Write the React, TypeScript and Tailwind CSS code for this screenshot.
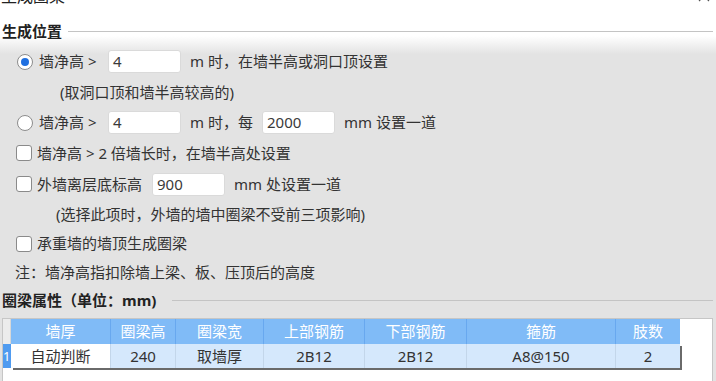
import React from "react";

const FONT = { fontFamily: '"Noto Sans", "Noto Sans CJK SC", sans-serif' };

function Radio({ checked }: { checked?: boolean }) {
  return (
    <span className="w-[16px] h-[16px] rounded-full border border-[#8c8c8c] bg-white flex items-center justify-center shrink-0">
      {checked && <span className="w-[8px] h-[8px] rounded-full bg-[#1f6fe0]" />}
    </span>
  );
}

function Check() {
  return <span className="w-[16px] h-[16px] rounded-[3px] border border-[#8a8a8a] bg-white shrink-0" />;
}

function Input({ value, w = "w-[73px]" }: { value: string; w?: string }) {
  return (
    <div className={`${w} h-[23px] bg-white rounded-[3px] border border-[#dadada] flex items-center pl-[4px] text-[15px] text-[#3a3a3a] shrink-0`}>
      {value}
    </div>
  );
}

const cols = [
  { h: "墙厚", v: "自动判断", w: "w-[100px]", white: true },
  { h: "圈梁高", v: "240", w: "w-[65px]" },
  { h: "圈梁宽", v: "取墙厚", w: "w-[88px]" },
  { h: "上部钢筋", v: "2B12", w: "w-[101px]" },
  { h: "下部钢筋", v: "2B12", w: "w-[102px]" },
  { h: "箍筋", v: "A8@150", w: "w-[149px]" },
  { h: "肢数", v: "2", w: "w-[64px]" },
];

export default function App() {
  return (
    <div
      style={FONT}
      className="w-[716px] h-[381px] overflow-hidden text-[15px] text-[#333] bg-[linear-gradient(to_bottom,#ffffff_0px,#ffffff_36px,#e3e3e3_54px,#e3e3e3_100%)]"
    >
      {/* title bar (mostly cut off) */}
      <div className="h-[16px] -mt-[12px] flex items-end justify-between pl-[1px] pr-[6px] leading-[16px]">
        <span className="text-[16px] text-[#222]">生成圈梁</span>
        <svg width="12" height="12" viewBox="0 0 12 12" className="mb-[2px]">
          <path d="M1 1L11 11M11 1L1 11" stroke="#555" strokeWidth="1.2" />
        </svg>
      </div>

      {/* section 1 */}
      <div className="mt-[12px] h-[30px] flex items-center pl-[2px] pr-[3px]">
        <span className="w-[66px] font-bold text-[#222] shrink-0">生成位置</span>
        <div className="flex-1 h-px bg-[#c4c4c4]" />
      </div>

      <div className="h-[31px] flex items-center pl-[17px]">
        <Radio checked />
        <span className="ml-[6px] w-[69px]">墙净高 &gt;</span>
        <Input value="4" />
        <span className="ml-[9px]">m 时，在墙半高或洞口顶设置</span>
      </div>

      <div className="h-[30px] flex items-center pl-[60px]">(取洞口顶和墙半高较高的)</div>

      <div className="h-[31px] flex items-center pl-[17px]">
        <Radio />
        <span className="ml-[6px] w-[69px]">墙净高 &gt;</span>
        <Input value="4" />
        <span className="ml-[9px] w-[72px]">m 时，每</span>
        <Input value="2000" />
        <span className="ml-[9px]">mm 设置一道</span>
      </div>

      <div className="h-[30px] flex items-center pl-[16px]">
        <Check />
        <span className="ml-[5px]">墙净高 &gt; 2 倍墙长时，在墙半高处设置</span>
      </div>

      <div className="h-[32px] flex items-center pl-[16px]">
        <Check />
        <span className="ml-[5px] w-[115px]">外墙离层底标高</span>
        <Input value="900" />
        <span className="ml-[9px]">mm 处设置一道</span>
      </div>

      <div className="h-[29px] flex items-center pl-[56px]">(选择此项时，外墙的墙中圈梁不受前三项影响)</div>

      <div className="h-[29px] flex items-center pl-[16px]">
        <Check />
        <span className="ml-[5px]">承重墙的墙顶生成圈梁</span>
      </div>

      <div className="h-[28px] flex items-center pl-[15px]">注：墙净高指扣除墙上梁、板、压顶后的高度</div>

      {/* section 2 */}
      <div className="h-[28px] flex items-center pl-[2px] pr-[3px]">
        <span className="w-[170px] font-bold text-[#222] shrink-0">圈梁属性（单位：mm)</span>
        <div className="flex-1 h-px bg-[#c4c4c4]" />
      </div>

      {/* table */}
      <div className="mt-[4px] ml-[2px] w-[711px] h-[80px] bg-white border border-[#c6c6c6]">
        <div className="flex h-[25px]">
          <div className="w-[8px] bg-[#ececec] border-r border-[#d8d8d8]" />
          {cols.map((c, i) => (
            <div
              key={c.h}
              className={`${c.w} ${i < cols.length - 1 ? "border-r border-[#68a8ef]" : ""} bg-[#80bbf7] text-white flex items-center justify-center`}
            >
              {c.h}
            </div>
          ))}
        </div>
        <div className="flex h-[24px]">
          <div className="w-[8px] bg-[#4f9bf0] text-white text-[13px] flex items-center justify-start pl-[0px] leading-none">1</div>
          <div className="flex shadow-[2px_2px_0_#6a6a6a]">
            {cols.map((c, i) => (
              <div
                key={c.h}
                className={`${c.w} ${i < cols.length - 1 ? "border-r border-[#c3d6ea]" : ""} ${c.white ? "bg-white" : "bg-[#d5e8fc]"} text-[#333] flex items-center justify-center`}
              >
                {c.v}
              </div>
            ))}
          </div>
        </div>
      </div>
    </div>
  );
}
